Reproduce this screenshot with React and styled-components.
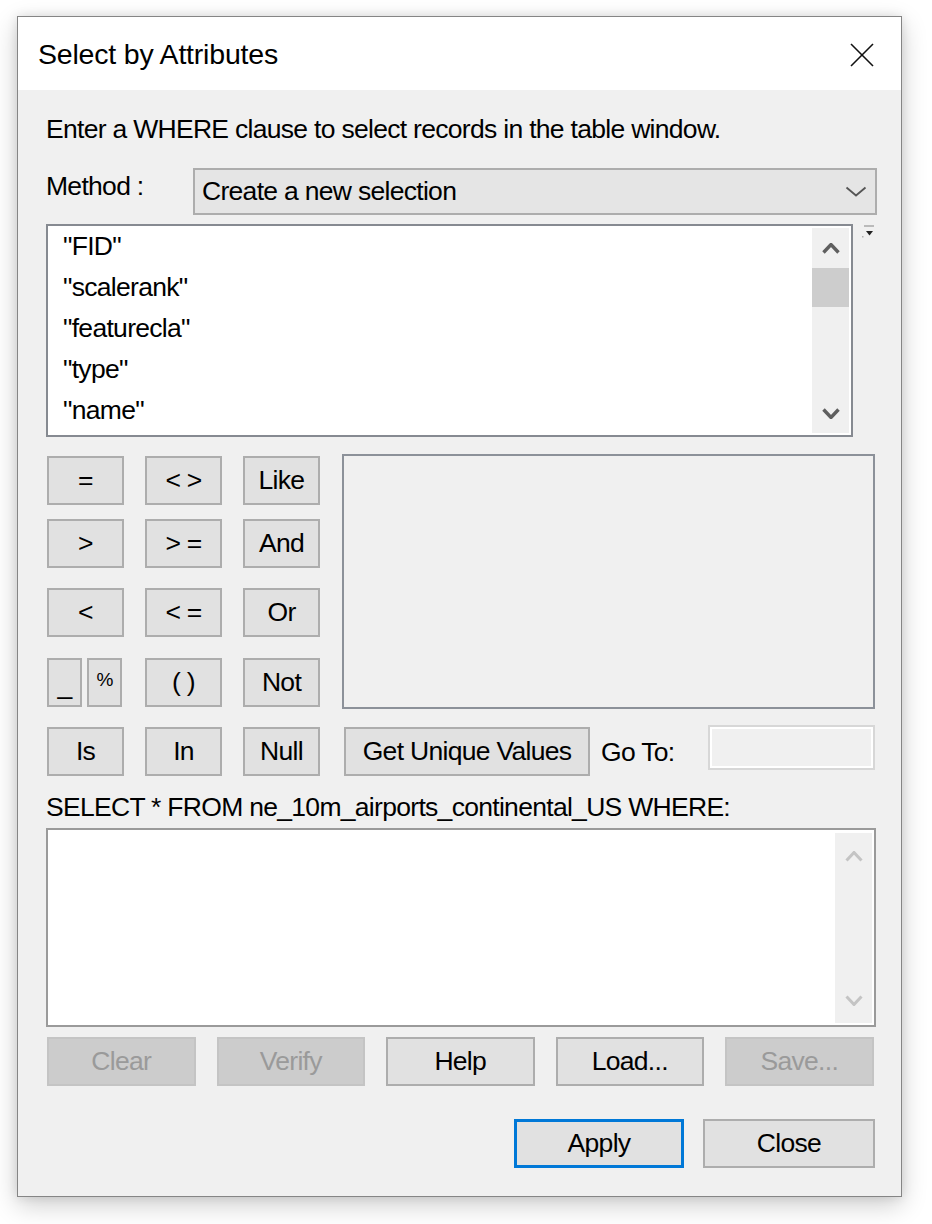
import React from 'react';
import styled, { createGlobalStyle } from 'styled-components';

const Global = createGlobalStyle`
  html, body { margin: 0; padding: 0; background: #ffffff; }
  body { font-family: "Liberation Sans", Arial, sans-serif; color: #000; }
`;

const Page = styled.div`
  width: 932px;
  height: 1224px;
  box-sizing: border-box;
  padding: 16px 0 0 17px;
  background: #fff;
`;

const Window = styled.div`
  width: 885px;
  height: 1181px;
  box-sizing: border-box;
  border: 1px solid #858585;
  background: #f0f0f0;
  box-shadow: 0 8px 24px rgba(0, 0, 0, 0.2), 0 0 10px rgba(0, 0, 0, 0.1);
  display: flex;
  flex-direction: column;
`;

const TitleBar = styled.div`
  height: 73px;
  flex: none;
  background: #ffffff;
  display: flex;
  align-items: center;
  justify-content: space-between;
  padding: 2px 27px 0 20px;
  box-sizing: border-box;
`;

const Title = styled.div`
  font-size: 28.5px;
  letter-spacing: -0.2px;
  color: #000;
`;

const CloseGlyph = styled.svg`
  width: 24px;
  height: 24px;
  display: block;
`;

const Content = styled.div`
  display: flex;
  flex-direction: column;
  padding: 24px 25px 0 28px;
  font-size: 26.5px;
  letter-spacing: -0.7px;
`;

const Text = styled.div`
  line-height: 30px;
  height: 30px;
  white-space: nowrap;
  margin-top: ${p => p.$mt || 0}px;
`;

const MethodRow = styled.div`
  display: flex;
  height: 47px;
  margin-top: 24px;
`;

const MethodLabel = styled.div`
  width: 147px;
  flex: none;
  line-height: 30px;
  margin-top: 3px;
`;

const Dropdown = styled.div`
  flex: 1;
  box-sizing: border-box;
  height: 47px;
  margin-right: -1px;
  border: 2px solid #adadad;
  background: #e5e5e5;
  display: flex;
  align-items: center;
  justify-content: space-between;
  padding: 0 8px 0 7px;
`;

const FieldRow = styled.div`
  display: flex;
  align-items: flex-start;
  gap: 8px;
  margin-top: 9px;
`;

const ListBox = styled.div`
  width: 807px;
  height: 213px;
  box-sizing: border-box;
  border: 2px solid #868a91;
  background: #ffffff;
  display: flex;
  overflow: hidden;
`;

const Items = styled.div`
  flex: 1;
  padding-left: 15px;
`;

const Item = styled.div`
  line-height: 41px;
  height: 41px;
  white-space: nowrap;
`;

const ScrollBar = styled.div`
  width: 37px;
  flex: none;
  margin: 2px 2px 2px 0;
  background: #f0f0f0;
  display: flex;
  flex-direction: column;
`;

const ScrollArrow = styled.div`
  height: 40px;
  flex: none;
  display: flex;
  align-items: center;
  justify-content: center;
`;

const Thumb = styled.div`
  height: 39px;
  flex: none;
  background: #cdcdcd;
`;

const Spacer = styled.div`
  flex: 1;
`;

const Grid = styled.div`
  display: grid;
  grid-template-columns: 77px 77px 77px 1fr;
  grid-template-rows: 49px 63px 69px 70px 69px;
  column-gap: 21px;
  padding-left: 1px;
  margin-top: 19px;
`;

const Btn = styled.div`
  box-sizing: border-box;
  height: 49px;
  width: ${p => (p.$w ? `${p.$w}px` : 'auto')};
  flex: none;
  align-self: end;
  border: ${p => (p.$primary ? '3px solid #0078d7' : p.$disabled ? '2px solid #c4c4c4' : '2px solid #adadad')};
  background: ${p => (p.$disabled ? '#cccccc' : '#e1e1e1')};
  color: ${p => (p.$disabled ? '#9a9a9a' : '#000')};
  font-size: ${p => p.$fs || 26.5}px;
  display: flex;
  align-items: ${p => p.$align || 'center'};
  justify-content: center;
  white-space: nowrap;
  padding-top: ${p => p.$pt || 0}px;
  padding-bottom: ${p => p.$pb || 0}px;
`;

const SplitCell = styled.div`
  display: flex;
  gap: 5px;
  align-self: end;
`;

const ValuesBox = styled.div`
  grid-column: 4;
  grid-row: 1 / span 4;
  margin: -2px 1px -2px 1px;
  box-sizing: border-box;
  border: 2px solid #8c9199;
  background: #f0f0f0;
`;

const ValueTools = styled.div`
  grid-column: 4;
  grid-row: 5;
  align-self: end;
  height: 49px;
  display: flex;
  align-items: center;
  margin-left: 3px;
`;

const GoLabel = styled.div`
  margin-left: 11px;
  line-height: 30px;
`;

const GoInput = styled.div`
  margin-left: auto;
  margin-right: 1px;
  align-self: flex-start;
  margin-top: -2px;
  width: 167px;
  height: 45px;
  box-sizing: border-box;
  border: 2px solid #d7d7d7;
  box-shadow: inset 0 0 0 2px #ffffff;
  background: #f0f0f0;
`;

const TextArea = styled.div`
  margin-top: 6px;
  height: 199px;
  box-sizing: border-box;
  border: 2px solid #9a9a9a;
  background: #ffffff;
  display: flex;
  justify-content: flex-end;
`;

const AreaScroll = styled.div`
  width: 37px;
  margin: 3px 2px 2px 0;
  background: #f0f0f0;
  display: flex;
  flex-direction: column;
  justify-content: space-between;
`;

const AreaArrow = styled.div`
  height: 46px;
  display: flex;
  align-items: center;
  justify-content: center;
`;

const ButtonRow = styled.div`
  display: flex;
  gap: 21px;
  margin-top: 10px;
  padding-left: 1px;
`;

const ActionRow = styled.div`
  display: flex;
  justify-content: flex-end;
  gap: 19px;
  margin-top: 33px;
  padding-right: 1px;
`;

const Chevron = ({ dir = 'down', w = 18, h = 11, color = '#5f5f5f', sw = 3.4 }) => (
  <svg width={w} height={h} viewBox={`0 0 ${w} ${h}`} style={{ display: 'block' }}>
    {dir === 'down' ? (
      <polyline points={`1.5,1.5 ${w / 2},${h - 1.5} ${w - 1.5},1.5`} fill="none" stroke={color} strokeWidth={sw} />
    ) : (
      <polyline points={`1.5,${h - 1.5} ${w / 2},1.5 ${w - 1.5},${h - 1.5}`} fill="none" stroke={color} strokeWidth={sw} />
    )}
  </svg>
);

const SortIcon = () => (
  <svg width="14" height="15" viewBox="0 0 14 15" style={{ display: 'block', marginTop: '1px' }}>
    <line x1="3" y1="1" x2="13" y2="1" stroke="#a8a8a8" strokeWidth="1.5" />
    <polygon points="5,6 12,6 8.5,10.5" fill="#222" />
    <rect x="1" y="11" width="1.5" height="1.5" fill="#b0b0b0" />
  </svg>
);

const fields = ['"FID"', '"scalerank"', '"featurecla"', '"type"', '"name"'];

export default function App() {
  return (
    <Page>
      <Global />
      <Window>
        <TitleBar>
          <Title>Select by Attributes</Title>
          <CloseGlyph viewBox="0 0 24 24">
            <line x1="1" y1="1" x2="23" y2="23" stroke="#111" strokeWidth="1.6" />
            <line x1="23" y1="1" x2="1" y2="23" stroke="#111" strokeWidth="1.6" />
          </CloseGlyph>
        </TitleBar>
        <Content>
          <Text>Enter a WHERE clause to select records in the table window.</Text>
          <MethodRow>
            <MethodLabel>Method :</MethodLabel>
            <Dropdown>
              <span>Create a new selection</span>
              <Chevron dir="down" w={22} h={11} color="#555" sw={1.8} />
            </Dropdown>
          </MethodRow>
          <FieldRow>
            <ListBox>
              <Items>
                {fields.map(f => (
                  <Item key={f}>{f}</Item>
                ))}
              </Items>
              <ScrollBar>
                <ScrollArrow>
                  <Chevron dir="up" />
                </ScrollArrow>
                <Thumb />
                <Spacer />
                <ScrollArrow>
                  <Chevron dir="down" />
                </ScrollArrow>
              </ScrollBar>
            </ListBox>
            <SortIcon />
          </FieldRow>
          <Grid>
            <Btn>=</Btn>
            <Btn>&lt; &gt;</Btn>
            <Btn>Like</Btn>
            <ValuesBox />
            <Btn>&gt;</Btn>
            <Btn>&gt; =</Btn>
            <Btn>And</Btn>
            <Btn>&lt;</Btn>
            <Btn>&lt; =</Btn>
            <Btn>Or</Btn>
            <SplitCell>
              <Btn $w={35} $align="flex-end" $pb={4}>_</Btn>
              <Btn $w={35} $fs={19} $align="flex-start" $pt={9}>%</Btn>
            </SplitCell>
            <Btn>( )</Btn>
            <Btn>Not</Btn>
            <Btn>Is</Btn>
            <Btn>In</Btn>
            <Btn>Null</Btn>
            <ValueTools>
              <Btn $w={246}>Get Unique Values</Btn>
              <GoLabel>Go To:</GoLabel>
              <GoInput />
            </ValueTools>
          </Grid>
          <Text $mt={16}>SELECT * FROM ne_10m_airports_continental_US WHERE:</Text>
          <TextArea>
            <AreaScroll>
              <AreaArrow>
                <Chevron dir="up" color="#c4c4c4" sw={3} />
              </AreaArrow>
              <AreaArrow>
                <Chevron dir="down" color="#c4c4c4" sw={3} />
              </AreaArrow>
            </AreaScroll>
          </TextArea>
          <ButtonRow>
            <Btn $w={148.5} $disabled>Clear</Btn>
            <Btn $w={148.5} $disabled>Verify</Btn>
            <Btn $w={148.5}>Help</Btn>
            <Btn $w={148.5}>Load...</Btn>
            <Btn $w={148.5} $disabled>Save...</Btn>
          </ButtonRow>
          <ActionRow>
            <Btn $w={170} $primary>Apply</Btn>
            <Btn $w={172}>Close</Btn>
          </ActionRow>
        </Content>
      </Window>
    </Page>
  );
}
